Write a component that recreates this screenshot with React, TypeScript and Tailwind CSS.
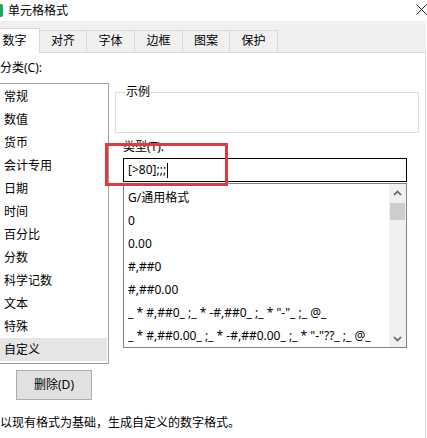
export default function App() {
  const cats = ['常规', '数值', '货币', '会计专用', '日期', '时间', '百分比', '分数', '科学记数', '文本', '特殊', '自定义'];
  const fmts = [
    'G/通用格式',
    '0',
    '0.00',
    '#,##0',
    '#,##0.00',
    '_ * #,##0_ ;_ * -#,##0_ ;_ * "-"_ ;_ @_',
    '_ * #,##0.00_ ;_ * -#,##0.00_ ;_ * "-"??_ ;_ @_',
  ];
  const tabs = ['对齐', '字体', '边框', '图案', '保护'];
  return (
    <div className="relative w-[427px] h-[438px] overflow-hidden bg-white text-[12px] leading-[14px] text-black font-['Noto_Sans','Noto_Sans_CJK_SC',sans-serif]">
      {/* title bar */}
      <div className="h-[21px] flex items-center">
        <div className="w-[3px] h-[13px] bg-[#1fa463] rounded-r-[2px]" />
        <span className="ml-[5px] text-[12px] leading-[14px]">单元格格式</span>
        <svg className="ml-auto mr-[0px] mb-[3px]" width="11" height="11" viewBox="0 0 11 11">
          <path d="M0.5 0.5 L10.5 10.5 M10.5 0.5 L0.5 10.5" stroke="#222" strokeWidth="1" fill="none" />
        </svg>
      </div>
      {/* tab bar */}
      <div className="h-[32px] w-[426px] bg-[#f0f0f0] flex items-end border-b border-[#d9d9d9]">
        <div className="relative -ml-[10px] -mb-px w-[50px] h-[25px] bg-white border-t border-r border-[#d9d9d9] flex items-center justify-center">
          <span className="ml-[0px]">数字</span>
        </div>
        {tabs.map((t, i) => (
          <div
            key={t}
            className={`h-[22px] ${i === 0 ? 'w-[47px]' : i === 3 ? 'w-[47px]' : 'w-[48px]'} border-t border-r border-[#d9d9d9] bg-[#f0f0f0] flex items-center justify-center pb-[1px]`}
          >
            {t}
          </div>
        ))}
      </div>
      {/* content */}
      <div className="w-[426px] h-[385px] border-r border-[#d9d9d9] bg-white flex flex-col">
        <div className="pt-[8px] leading-[14px]">分类(C):</div>
        <div className="mt-[8px] flex items-start">
          {/* left */}
          <div className="w-[109px] flex flex-col">
            <div className="h-[281px] border-y border-r border-[#a0a0a0] pt-[1px] pr-[1px]">
              {cats.map((c) => (
                <div
                  key={c}
                  className={`h-[23px] flex items-center pl-[4px] ${c === '自定义' ? 'bg-[#e5e5e5]' : ''}`}
                >
                  {c}
                </div>
              ))}
            </div>
            <button className="mt-[6px] ml-[16px] w-[76px] h-[30px] bg-[#e1e1e1] border border-[#adadad] flex items-center justify-center">
              删除(D)
            </button>
          </div>
          {/* right */}
          <div className="ml-[6px] w-[304px] flex flex-col">
            <div className="relative mt-[9px] h-[41px] border border-[#dcdcdc]">
              <span className="absolute -top-[8px] left-[9px] px-[1px] bg-white">示例</span>
            </div>
            <div className="mt-[7px] ml-[8px] leading-[14px]">类型(T):</div>
            <div className="mt-[4px] ml-[8px] w-[284px] h-[24px] border border-black flex items-center pl-[4px]">
              <span>[&gt;80];;;</span>
              <span className="ml-[1px] w-px h-[15px] bg-black" />
            </div>
            <div className="mt-[1px] ml-[8px] w-[284px] h-[165px] border border-[#828282] flex">
              <div className="flex-1 pt-[2px] pl-[4px] overflow-hidden">
                {fmts.map((f) => (
                  <div key={f} className="h-[23px] flex items-center whitespace-pre">
                    {f}
                  </div>
                ))}
              </div>
              <div className="w-[17px] bg-[#f0f0f0] flex flex-col items-center">
                <svg className="mt-[6px]" width="9" height="6" viewBox="0 0 9 6">
                  <path d="M1 5 L4.5 1.5 L8 5" stroke="#606060" strokeWidth="1.6" fill="none" />
                </svg>
                <div className="mt-[7px] w-[15px] h-[17px] bg-[#cdcdcd]" />
                <svg className="mt-auto mb-[5px]" width="9" height="6" viewBox="0 0 9 6">
                  <path d="M1 1 L4.5 4.5 L8 1" stroke="#606060" strokeWidth="1.6" fill="none" />
                </svg>
              </div>
            </div>
          </div>
        </div>
        <div className="mt-[16px] leading-[14px]">以现有格式为基础，生成自定义的数字格式。</div>
      </div>
      {/* red highlight */}
      <div className="absolute left-[105px] top-[143px] w-[123px] h-[43px] border-[3px] border-[#e0393e]" />
    </div>
  );
}
